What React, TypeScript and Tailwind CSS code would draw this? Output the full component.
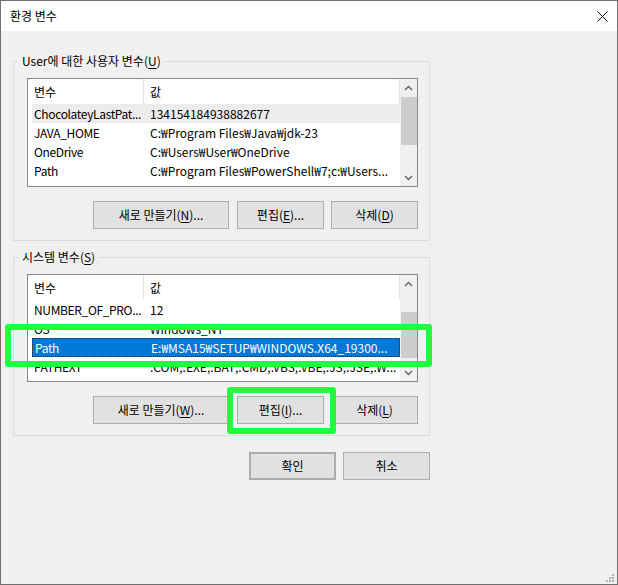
import React from "react";

type Row = { name: string; value: string; sel?: "inactive" | "active" };

function Chevron({ dir }: { dir: "up" | "down" }) {
  return (
    <svg width="9" height="6" viewBox="0 0 9 6" className="block">
      {dir === "up" ? (
        <path d="M1 5 L4.5 1.5 L8 5" fill="none" stroke="#606060" strokeWidth="1.4" />
      ) : (
        <path d="M1 1 L4.5 4.5 L8 1" fill="none" stroke="#606060" strokeWidth="1.4" />
      )}
    </svg>
  );
}

function Mn({ children }: { children: React.ReactNode }) {
  return <span className="underline underline-offset-[2px]">{children}</span>;
}

function ListView({
  rows,
  heightClass,
  thumbClass,
}: {
  rows: Row[];
  heightClass: string;
  thumbClass: string;
}) {
  return (
    <div className={`flex w-[391px] ${heightClass} overflow-hidden border border-[#828790] bg-white`}>
      <div className="flex min-w-0 flex-1 flex-col overflow-hidden">
        <div className="flex h-[25px] shrink-0 items-center border-r border-[#e5e5e5] bg-white">
          <div className="flex h-full w-[116px] items-center border-r border-[#e5e5e5] pl-[6px]">변수</div>
          <div className="pl-[6px]">값</div>
        </div>
        {rows.map((r, i) => {
          const bg =
            r.sel === "active"
              ? "bg-[#0078d7] text-white border border-dotted border-[#2b2b2b]"
              : r.sel === "inactive"
              ? "bg-[#ececec]"
              : "";
          return (
            <div key={i} className={`ml-[4px] flex h-[19px] shrink-0 items-center ${bg}`}>
              <div className="w-[112px] shrink-0 whitespace-nowrap pl-[2px] tracking-[-0.35px]">{r.name}</div>
              <div className="whitespace-nowrap pl-[6px]">{r.value}</div>
            </div>
          );
        })}
      </div>
      <div className="flex w-[17px] shrink-0 flex-col bg-[#f0f0f0]">
        <div className="flex h-[17px] shrink-0 items-center justify-center">
          <Chevron dir="up" />
        </div>
        <div className="flex-1">
          <div className={`ml-[1px] bg-[#cdcdcd] ${thumbClass}`} />
        </div>
        <div className="flex h-[17px] shrink-0 items-center justify-center">
          <Chevron dir="down" />
        </div>
      </div>
    </div>
  );
}

function Btn({ children, className = "" }: { children: React.ReactNode; className?: string }) {
  return (
    <button
      className={`flex h-[28px] items-center justify-center border border-[#adadad] bg-[#e1e1e1] text-[12px] leading-[16px] text-black ${className}`}
    >
      {children}
    </button>
  );
}

export default function App() {
  const userRows: Row[] = [
    { name: "ChocolateyLastPat...", value: "134154184938882677", sel: "inactive" },
    { name: "JAVA_HOME", value: "C:₩Program Files₩Java₩jdk-23" },
    { name: "OneDrive", value: "C:₩Users₩User₩OneDrive" },
    { name: "Path", value: "C:₩Program Files₩PowerShell₩7;c:₩Users..." },
  ];
  const sysRows: Row[] = [
    { name: "NUMBER_OF_PRO...", value: "12" },
    { name: "OS", value: "Windows_NT" },
    { name: "Path", value: "E:₩MSA15₩SETUP₩WINDOWS.X64_19300...", sel: "active" },
    { name: "PATHEXT", value: ".COM;.EXE;.BAT;.CMD;.VBS;.VBE;.JS;.JSE;.W..." },
  ];

  return (
    <div className="relative flex h-[585px] w-[618px] flex-col border border-[#707070] bg-[#f0f0f0] font-['Noto_Sans_CJK_KR','Noto_Sans',sans-serif] text-[12px] leading-[16px] text-black">
      {/* title bar */}
      <div className="flex h-[30px] shrink-0 items-center justify-between bg-white pl-[9px] pr-[9px]">
        <span>환경 변수</span>
        <svg width="11" height="11" viewBox="0 0 11 11" className="block">
          <path d="M0.5 0.5 L10.5 10.5 M10.5 0.5 L0.5 10.5" stroke="#111" strokeWidth="1" />
        </svg>
      </div>

      {/* body */}
      <div className="flex flex-1 flex-col px-[12px] pt-[22px]">
        <fieldset className="w-[417px] border border-[#dcdcdc]">
          <legend className="ml-[5px] px-[3px] leading-[16px]">
            User에 대한 사용자 변수(<Mn>U</Mn>)
          </legend>
          <div className="pb-[11px] pl-[13px] pt-[9px]">
            <ListView rows={userRows} heightClass="h-[109px]" thumbClass="mt-[1px] h-[48px]" />
            <div className="mt-[14px] flex w-[391px] justify-end gap-[7px]">
              <Btn className="mr-[1px] w-[136px]">
                새로 만들기(<Mn>N</Mn>)...
              </Btn>
              <Btn className="w-[87px]">
                편집(<Mn>E</Mn>)...
              </Btn>
              <Btn className="w-[87px]">
                삭제(<Mn>D</Mn>)
              </Btn>
            </div>
          </div>
        </fieldset>

        <fieldset className="mt-[8px] w-[417px] border border-[#dcdcdc]">
          <legend className="ml-[5px] px-[3px] leading-[16px]">
            시스템 변수(<Mn>S</Mn>)
          </legend>
          <div className="pb-[11px] pl-[13px] pt-[9px]">
            <ListView rows={sysRows} heightClass="h-[108px]" thumbClass="mt-[20px] h-[46px]" />
            <div className="mt-[14px] flex w-[391px] justify-end gap-[7px]">
              <Btn className="mr-[1px] w-[136px]">
                새로 만들기(<Mn>W</Mn>)...
              </Btn>
              <Btn className="w-[87px]">
                편집(<Mn>I</Mn>)...
              </Btn>
              <Btn className="w-[87px]">
                삭제(<Mn>L</Mn>)
              </Btn>
            </div>
          </div>
        </fieldset>

        <div className="mt-[16px] flex w-[417px] justify-end gap-[7px]">
          <Btn className="w-[87px] border-2 border-[#0078d7]">확인</Btn>
          <Btn className="w-[87px]">취소</Btn>
        </div>
      </div>

      {/* resize grip */}
      <svg width="8" height="8" viewBox="0 0 8 8" className="absolute bottom-[2px] right-[3px] block">
        <rect x="6" y="0" width="2" height="2" fill="#b0b0b0" />
        <rect x="3" y="3" width="2" height="2" fill="#b0b0b0" />
        <rect x="6" y="3" width="2" height="2" fill="#b0b0b0" />
        <rect x="0" y="6" width="2" height="2" fill="#b0b0b0" />
        <rect x="3" y="6" width="2" height="2" fill="#b0b0b0" />
        <rect x="6" y="6" width="2" height="2" fill="#b0b0b0" />
      </svg>

      {/* green highlight annotations */}
      <div className="pointer-events-none absolute left-[4px] top-[323px] h-[43px] w-[427px] rounded-[3px] border-[6px] border-[#1fff42]" />
      <div className="pointer-events-none absolute left-[226px] top-[386px] h-[47px] w-[109px] rounded-[3px] border-[6px] border-[#1fff42]" />
    </div>
  );
}
